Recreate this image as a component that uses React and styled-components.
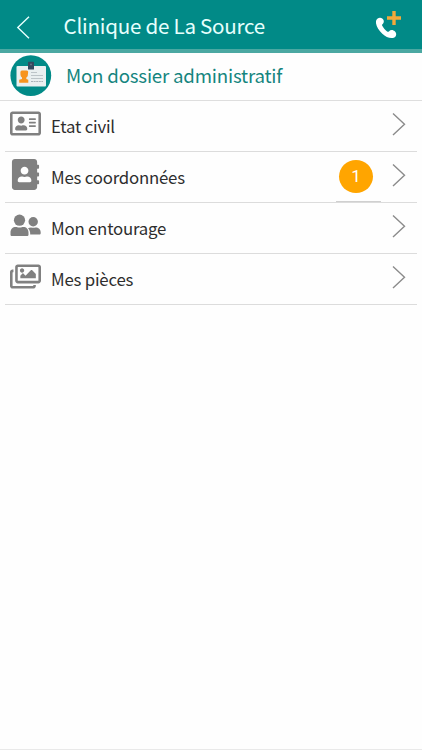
import React from "react";
import styled, { createGlobalStyle } from "styled-components";
import { FaRegAddressCard, FaAddressBook, FaRegImages } from "react-icons/fa";

const GlobalStyle = createGlobalStyle`
  * {
    box-sizing: border-box;
  }
  body {
    margin: 0;
    background: #fefefe;
    font-family: "Noto Sans CJK SC", "Noto Sans", sans-serif;
  }
`;

const Page = styled.div`
  display: flex;
  flex-direction: column;
  height: 750px;
  border-bottom: 1px solid #e9e9e9;
  overflow: hidden;
`;

const Header = styled.header`
  display: flex;
  align-items: center;
  height: 53px;
  padding: 0 21px 0 16px;
  background: #018a87;
  border-bottom: 4px solid #4ba8a2;
`;

const BackButton = styled.button`
  display: flex;
  width: 47px;
  padding: 6px 0 0;
  border: 0;
  background: none;
`;

const Title = styled.h1`
  flex: 1;
  margin: 0;
  padding-left: 0.5px;
  color: #e6fffd;
  font-size: 20.6px;
  font-weight: 400;
  letter-spacing: -0.25px;
  line-height: 30px;
  white-space: nowrap;
`;

const CallButton = styled.button`
  position: relative;
  display: flex;
  width: 26px;
  height: 28px;
  padding: 6px 0 0 1px;
  border: 0;
  background: none;
`;

const Plus = styled.svg`
  position: absolute;
  top: 0;
  right: 0;
`;

const Section = styled.div`
  display: flex;
  align-items: center;
  height: 48px;
  padding: 0 0 2px 10px;
  border-bottom: 1px solid #dedede;
`;

const SectionTitle = styled.h2`
  margin: 0 0 0 14px;
  padding-bottom: 1px;
  color: #15857f;
  font-size: 18.7px;
  font-weight: 400;
  letter-spacing: -0.2px;
  line-height: 28px;
`;

const List = styled.ul`
  margin: 0;
  padding: 0 5px;
  list-style: none;
`;

const Item = styled.li`
  display: flex;
  height: 51px;
  padding: 0 11px 0 5px;
  border-bottom: 1px solid #dcdcdc;
`;

const IconBox = styled.span`
  display: flex;
  align-items: center;
  justify-content: center;
  width: 31px;
  height: 45px;
  color: #808080;
`;

const Label = styled.span`
  flex: 1;
  margin-left: 10px;
  padding-top: 12px;
  color: #2e2e2e;
  font-size: 16.8px;
  letter-spacing: -0.2px;
  line-height: 26px;
`;

const BadgeBox = styled.span`
  width: 45px;
  height: 50px;
  margin-right: 11px;
  padding: 8px 0 0 3px;
  border-bottom: 1px solid #d0d0d0;
`;

const Badge = styled.span`
  display: block;
  width: 34px;
  height: 33px;
  border-radius: 50%;
  background: #ffa500;
  color: #fff;
  font-family: Roboto, sans-serif;
  font-size: 17px;
  line-height: 33px;
  text-align: center;
`;

const Arrow = styled.svg`
  flex: none;
  margin-top: 11px;
`;

function Chevron() {
  return (
    <Arrow width="14" height="24" viewBox="0 0 14 24" fill="none">
      <path d="M1 1.5 12.5 12.2 1 23" stroke="#8b8b8b" strokeWidth="1.4" />
    </Arrow>
  );
}

function Handset() {
  return (
    <svg width="22" height="22" viewBox="0 0 22 22">
      <path
        d="M.3 3.2C.9 1.6 2.5.7 4.1.8c1.6 0 3 1 3.5 2.5.5 1.5 0 2.900-1.200 3.900-.5.5-.5 1 0 1.900 1.200 2.200 2.700 3.900 4.700 5.300.8.5 1.300.5 1.800 0 1.200-1.300 2.900-1.600 4.500-1 1.700.6 2.800 2.100 2.800 3.800 0 1.800-1.200 3.400-3.200 3.800-3.500.6-7.400-1.100-10.700-4.200C2.700 13.400 0 9.200-.1 5.200c0-.7.1-1.400.4-2Z"
        fill="#fff"
      />
    </svg>
  );
}

function People({ size }) {
  return (
    <svg width={size} height={size} viewBox="0 0 31 31" fill="currentColor">
      <circle cx="9.5" cy="10.2" r="5.6" />
      <path d="M.5 24.7v-2.200c0-3.500 2.200-5.500 5.200-5.500h.9c1.900.8 3.900.8 5.800 0h.9c3 0 5.200 2 5.200 5.500v2.200c0 .9-.6 1.400-1.500 1.400H2c-.9 0-1.500-.5-1.500-1.400Z" />
      <circle cx="23.2" cy="11.7" r="4.7" />
      <path d="M18 18.300c.9-.7 1.900-.9 3-.9 1.500.6 3 .6 4.500 0 3 0 5.200 1.900 5.200 4.800v1.100c0 .8-.5 1.300-1.300 1.300h-9.200c.1-2.700-.6-4.900-2.200-6.300Z" />
    </svg>
  );
}

function IdCard() {
  return (
    <svg width="42" height="42" viewBox="0 0 42 42">
      <circle cx="20.8" cy="20.6" r="20.4" fill="#018a87" />
      <rect x="6.5" y="11" width="29.5" height="20.5" rx="1" fill="#e9eff0" />
      <rect x="18" y="6.7" width="6" height="7.8" rx="0.6" fill="#34495e" />
      <circle cx="21" cy="9.4" r="0.9" fill="#6b7b8c" />
      <path
        d="M10.4 16.7 11.6 15.6h4.900c1.200 0 1.900.9 1.600 2l-.3 2.900c-.2 1-.8 1.600-1.500 2.100v1.400l2 .8v3H9.200v-3l2.800-.8v-1.400c-.9-.6-1.400-1.500-1.500-2.600Z"
        fill="#f7941e"
      />
      <path
        d="M21 17.5h6M21 20.5h12M21 23.5h12"
        stroke="#bcc4c8"
        strokeWidth="1"
      />
      <path
        d="M21 26.5h12"
        stroke="#aab4b9"
        strokeWidth="1"
        strokeDasharray="2 0.6"
      />
    </svg>
  );
}

const items = [
  { text: "Etat civil", Icon: FaRegAddressCard },
  { text: "Mes coordonnées", Icon: FaAddressBook, count: 1 },
  { text: "Mon entourage", Icon: People },
  { text: "Mes pièces", Icon: FaRegImages },
];

function App() {
  return (
    <>
      <GlobalStyle />
      <Page>
        <Header>
          <BackButton>
            <svg width="14" height="24" viewBox="0 0 14 24" fill="none">
              <path d="M13 0.7 1.8 11.5 13 22.3" stroke="#e6fffd" strokeWidth="1.4" />
            </svg>
          </BackButton>
          <Title>Clinique de La Source</Title>
          <CallButton>
            <Handset />
            <Plus width="14" height="14" viewBox="0 0 14 14">
              <path d="M7 0v14M0 7h14" stroke="#f2a93b" strokeWidth="3.4" />
            </Plus>
          </CallButton>
        </Header>
        <Section>
          <IdCard />
          <SectionTitle>Mon dossier administratif</SectionTitle>
        </Section>
        <List>
          {items.map(({ text, Icon, count }) => (
            <Item key={text}>
              <IconBox>
                <Icon size={31} />
              </IconBox>
              <Label>{text}</Label>
              {count && (
                <BadgeBox>
                  <Badge>{count}</Badge>
                </BadgeBox>
              )}
              <Chevron />
            </Item>
          ))}
        </List>
      </Page>
    </>
  );
}

export default App;
